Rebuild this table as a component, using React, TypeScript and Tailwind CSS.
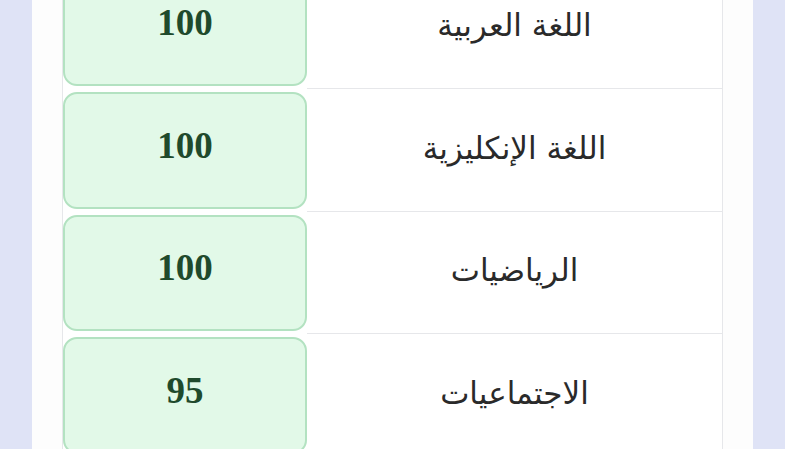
import React from 'react';

const ROWS = [
  { subject: 'اللغة العربية', score: 100 },
  { subject: 'اللغة الإنكليزية', score: 100 },
  { subject: 'الرياضيات', score: 100 },
  { subject: 'الاجتماعيات', score: 95 },
];

const App: React.FC = () => {
  return (
    <div className="h-screen overflow-hidden bg-[#dfe3f6] px-[32px]">
      <div className="flex h-full flex-col bg-[#fdfdfd] px-[30px]">
        <div className="-mt-[33.5px] border-x border-[#e6e7ea] bg-white">
          {ROWS.map((row, i) => (
            <div key={i} className="flex h-[122.5px]">
              <div className="w-[244px] py-[3px]">
                <div className="flex h-full items-center justify-center rounded-[14px] border-2 border-[#b3e2c1] bg-[#e2f9e8] pb-[10px]">
                  <span className="font-['Liberation_Serif',serif] text-[37px] font-bold text-[#1f4a2c]">
                    {row.score}
                  </span>
                </div>
              </div>
              <div
                dir="rtl"
                className="flex flex-1 items-center justify-center border-b border-[#e6e7ea] pb-[4px]"
              >
                <span className="font-['DejaVu_Sans',sans-serif] text-[31px] text-[#2a2a2a]">
                  {row.subject}
                </span>
              </div>
            </div>
          ))}
        </div>
      </div>
    </div>
  );
};

export default App;
